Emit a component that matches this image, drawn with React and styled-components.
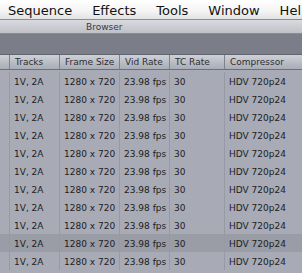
import styled, { createGlobalStyle } from 'styled-components'

const GlobalStyle = createGlobalStyle`
    html, body {
        margin: 0;
        padding: 0;
        background: #a8abb5;
        overflow: hidden;
    }
`

const menus = ['Sequence', 'Effects', 'Tools', 'Window', 'Hel']

const columns = [
    { key: 'tracks', title: 'Tracks' },
    { key: 'size', title: 'Frame Size' },
    { key: 'vid', title: 'Vid Rate' },
    { key: 'tc', title: 'TC Rate' },
    { key: 'comp', title: 'Compressor' },
]

const rows = Array.from({ length: 11 }, (_, i) => ({
    id: i,
    tracks: '1V, 2A',
    size: '1280 x 720',
    vid: '23.98 fps',
    tc: '30',
    comp: 'HDV 720p24',
    selected: i === 9,
}))

const App = () => {
    return (
        <Screen>
            <GlobalStyle />
            <MenuBar>
                {menus.map((m) => (
                    <MenuItem key={m}>{m}</MenuItem>
                ))}
            </MenuBar>
            <TitleBar>
                <Title>Browser</Title>
            </TitleBar>
            <Toolbar />
            <HeaderRow>
                <HeaderCell $lead />
                {columns.map((c) => (
                    <HeaderCell key={c.key}>{c.title}</HeaderCell>
                ))}
            </HeaderRow>
            <Body>
                {rows.map((r) => (
                    <Row key={r.id} $selected={r.selected}>
                        <Cell $lead />
                        {columns.map((c) => (
                            <Cell key={c.key}>{r[c.key]}</Cell>
                        ))}
                    </Row>
                ))}
            </Body>
        </Screen>
    )
}

export default App

const Screen = styled.div`
    width: 302px;
    height: 273px;
    overflow: hidden;
    background: #a8abb5;
`

const MenuBar = styled.div`
    height: 20px;
    display: flex;
    align-items: center;
    gap: 20px;
    padding: 3px 0 0 8px;
    box-sizing: border-box;
    background: linear-gradient(#ffffff, #f4f4f4 60%, #e2e2e2);
    border-bottom: 1px solid #8e8e8e;
    white-space: nowrap;
    overflow: hidden;
`

const MenuItem = styled.span`
    font-family: 'DejaVu Sans', sans-serif;
    font-size: 13px;
    color: #111111;
    line-height: 16px;
`

const TitleBar = styled.div`
    height: 13px;
    display: flex;
    align-items: center;
    padding-left: 86px;
    background: linear-gradient(#d8dadf, #bfc1c7);
    border-bottom: 1px solid #8a8d94;
`

const Title = styled.span`
    font-family: 'DejaVu Sans', sans-serif;
    font-size: 9px;
    color: #3a3a3a;
    line-height: 13px;
    padding-top: 1px;
`

const Toolbar = styled.div`
    height: 20px;
    background: #7b7e89;
`

const grid = `
    display: grid;
    grid-template-columns: 9px 50px 60px 50px 55px 1fr;
`

const HeaderRow = styled.div`
    ${grid}
    height: 14px;
    background: linear-gradient(#cdd0d6, #b4b7c0 70%, #a9adb6);
    border-top: 1px solid #62656e;
    border-bottom: 1px solid #6e717a;
`

const HeaderCell = styled.div`
    font-family: 'DejaVu Sans', sans-serif;
    font-size: 9px;
    color: #2e2e32;
    line-height: 13px;
    padding-top: 1px;
    padding-left: ${(p) => (p.$lead ? '0' : '5px')};
    border-left: ${(p) => (p.$lead ? 'none' : '1px solid #7f828b')};
    white-space: nowrap;
    overflow: hidden;
`

const Body = styled.div`
    padding-top: 2px;
`

const Row = styled.div`
    ${grid}
    height: 18px;
    background: ${(p) => (p.$selected ? '#9a9ca6' : 'transparent')};
`

const Cell = styled.div`
    font-family: 'DejaVu Sans', sans-serif;
    font-size: 9px;
    color: #1c1c22;
    line-height: 16px;
    padding-top: 2px;
    padding-left: ${(p) => (p.$lead ? '0' : '4px')};
    border-left: ${(p) => (p.$lead ? 'none' : '1px solid #979aa4')};
    white-space: nowrap;
    overflow: hidden;
`
